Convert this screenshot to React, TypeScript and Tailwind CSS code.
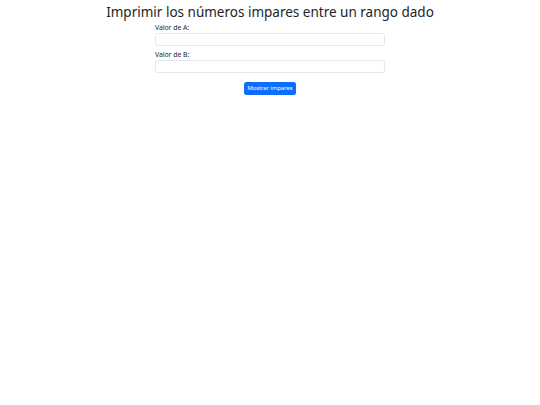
export default function App() {
  return (
    <div className="min-h-[405px] bg-white font-['Noto_Sans',sans-serif] text-[#212529]">
      <h1 className="pt-[3px] text-center text-[13.5px] leading-[18px]">
        Imprimir los números impares entre un rango dado
      </h1>
      <form className="mx-auto mt-[2px] w-[230px]" onSubmit={(e) => e.preventDefault()}>
        <div>
          <label className="block text-[6.8px] leading-[10px]">Valor de A:</label>
          <input className="block h-[13px] w-full rounded-[2.5px] border border-[#e4e7eb] outline-none" />
        </div>
        <div className="mt-[4px]">
          <label className="block text-[6.8px] leading-[10px]">Valor de B:</label>
          <input className="block h-[13px] w-full rounded-[2.5px] border border-[#e4e7eb] outline-none" />
        </div>
        <div className="mt-[9px] flex justify-center">
          <button
            type="submit"
            className="h-[13px] rounded-[2.5px] bg-[#0d6efd] px-[3.5px] text-[5.8px] leading-[13px] text-white"
          >
            Mostrar impares
          </button>
        </div>
      </form>
    </div>
  )
}
